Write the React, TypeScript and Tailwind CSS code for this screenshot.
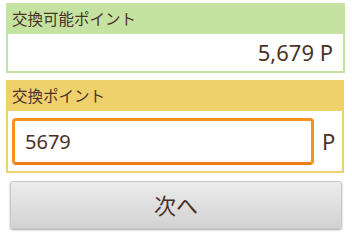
import { useState } from 'react';

export default function App() {
  const [points, setPoints] = useState('5679');

  return (
    <div
      className="h-[234px] w-[352px] bg-white pt-[3px] text-[#4a3228]"
      style={{ fontFamily: '"Noto Sans", "Noto Sans CJK JP", sans-serif' }}
    >
      {/* available points */}
      <div className="ml-[6px] mr-[7px] border-2 border-[#c4e3a1]">
        <div className="flex h-[29px] items-center bg-[#c4e3a1] pl-[4px] text-[15.5px]">
          交換可能ポイント
        </div>
        <div className="flex h-[37px] items-center justify-end pr-[10px] text-[22px]">
          5,679 P
        </div>
      </div>

      {/* exchange points */}
      <div className="ml-[6px] mr-[8px] mt-[7px] border-2 border-[#efd16c]">
        <div className="flex h-[29px] items-center bg-[#efd16c] pl-[4px] text-[15.5px]">
          交換ポイント
        </div>
        <div className="flex h-[60px] items-center gap-[8px] pl-[4px] pr-[8px]">
          <input
            type="text"
            inputMode="numeric"
            value={points}
            onChange={(e) => setPoints(e.target.value)}
            className="h-[47px] w-[302px] rounded-[4px] border-[3px] border-[#f7921e] border-b-[#f07c10] bg-[#fefefe] px-[10px] text-[20px] text-[#4a3228] outline-none"
          />
          <span className="text-[22px]">P</span>
        </div>
      </div>

      <button
        type="button"
        className="mx-[10px] mt-[8px] flex h-[48px] w-[332px] items-center justify-center rounded-[3px] border border-[#c8c8c8] bg-gradient-to-b from-[#ececec] to-[#d2d2d2] text-[22px] text-[#4a3228] shadow-[0_1px_2px_rgba(0,0,0,0.35)]"
      >
        次へ
      </button>
    </div>
  );
}
